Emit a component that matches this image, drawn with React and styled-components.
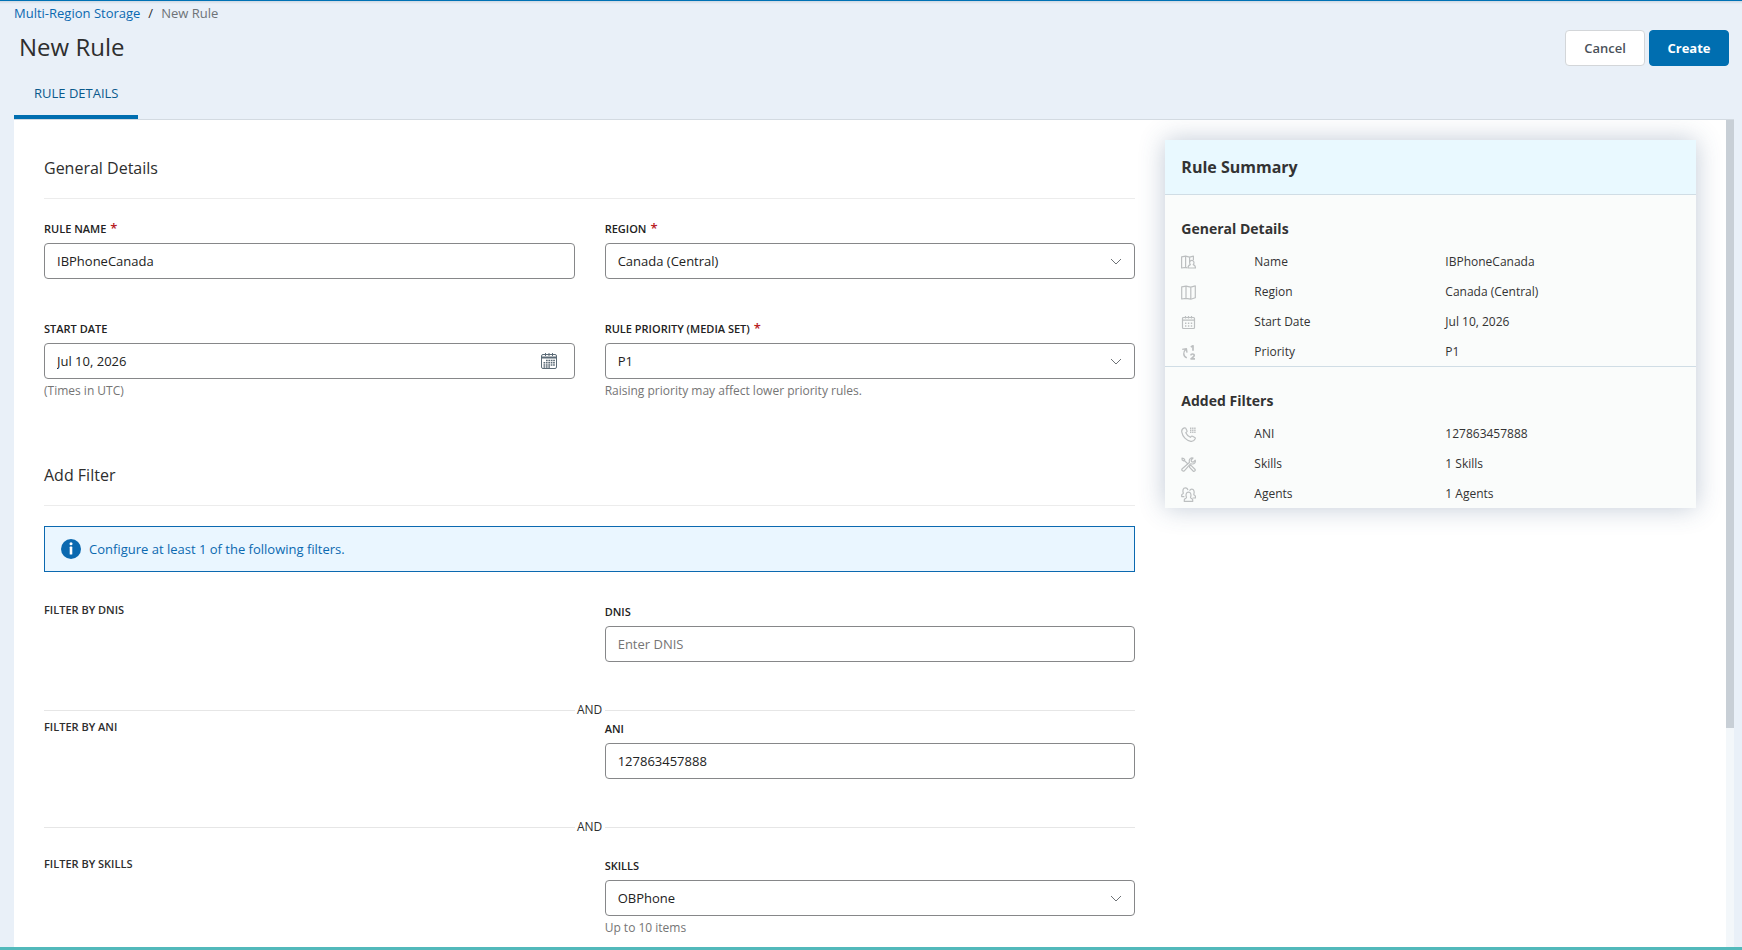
import React, { useState } from 'react'
import styled, { createGlobalStyle } from 'styled-components'

function App() {
  return (
    <>
        <GlobalStyle />
        <MainContainer>
            <Breadcrumb aria-label="Breadcrumb">
                <CrumbLink href="#storage">Multi-Region Storage</CrumbLink>
                <Slash>/</Slash>
                <Current>New Rule</Current>
            </Breadcrumb>
            <TopBar>
                <Title>New Rule</Title>
                <ButtonBox>
                    <Button type="button">Cancel</Button>
                    <Button type="button" $primary>Create</Button>
                </ButtonBox>
            </TopBar>
            <TabBar role="tablist">
                <Tab type="button" role="tab" aria-selected="true">RULE DETAILS</Tab>
            </TabBar>
            <PanelBox>
                <ContentBox>
                    <RuleForm />
                    <RuleSummary />
                </ContentBox>
                <ScrollTrack>
                    <ScrollThumb />
                </ScrollTrack>
            </PanelBox>
        </MainContainer>
    </>
  )
}

export default App

function RuleForm() {
  const [name, setName] = useState('IBPhoneCanada')
  const [date, setDate] = useState('Jul 10, 2026')
  const [dnis, setDnis] = useState('')
  const [ani, setAni] = useState('127863457888')

  return (
    <Form>
        <SectionTitle>General Details</SectionTitle>
        <FieldRow>
            <Field id="rule-name" label="RULE NAME" required>
                <Input id="rule-name" value={name} onChange={e => setName(e.target.value)} />
            </Field>
            <Field id="region" label="REGION" required>
                <Dropdown id="region" options={['Canada (Central)']} />
            </Field>
            <Field id="start-date" label="START DATE" hint="(Times in UTC)">
                <Input id="start-date" value={date} onChange={e => setDate(e.target.value)} />
                <CalendarButton type="button" aria-label="Open calendar">
                    <DatePickerIcon />
                </CalendarButton>
            </Field>
            <Field id="priority" label="RULE PRIORITY (MEDIA SET)" required hint="Raising priority may affect lower priority rules.">
                <Dropdown id="priority" options={['P1']} />
            </Field>
        </FieldRow>

        <SectionTitle className="filters">Add Filter</SectionTitle>
        <Notice>
            <InfoIcon />
            <span>Configure at least 1 of the following filters.</span>
        </Notice>
        <FilterRow $spaced>
            <FilterName>FILTER BY DNIS</FilterName>
            <Field id="dnis" label="DNIS">
                <Input id="dnis" placeholder="Enter DNIS" value={dnis} onChange={e => setDnis(e.target.value)} />
            </Field>
        </FilterRow>
        <Divider><span>AND</span></Divider>
        <FilterRow>
            <FilterName>FILTER BY ANI</FilterName>
            <Field id="ani" label="ANI">
                <Input id="ani" value={ani} onChange={e => setAni(e.target.value)} />
            </Field>
        </FilterRow>
        <Divider><span>AND</span></Divider>
        <FilterRow $spaced>
            <FilterName>FILTER BY SKILLS</FilterName>
            <Field id="skills" label="SKILLS" hint="Up to 10 items">
                <Dropdown id="skills" options={['OBPhone']} />
            </Field>
        </FilterRow>
    </Form>
  )
}

function Field({ id, label, required, hint, children }) {
  return (
    <FieldBox>
        <Label htmlFor={id}>
            {label}
            {required && <Star>*</Star>}
        </Label>
        <ControlBox>{children}</ControlBox>
        <Hint>{hint}</Hint>
    </FieldBox>
  )
}

function Dropdown({ id, options }) {
  return (
    <>
        <Select id={id}>
            {options.map(option => <option key={option}>{option}</option>)}
        </Select>
        <Chevron viewBox="0 0 12 8" aria-hidden="true">
            <path d="M1 1l5 5 5-5" />
        </Chevron>
    </>
  )
}

const generalItems = [
  { icon: <NameIcon />, label: 'Name', value: 'IBPhoneCanada' },
  { icon: <MapIcon />, label: 'Region', value: 'Canada (Central)' },
  { icon: <CalendarIcon />, label: 'Start Date', value: 'Jul 10, 2026' },
  { icon: <PriorityIcon />, label: 'Priority', value: 'P1' },
]

const filterItems = [
  { icon: <PhoneIcon />, label: 'ANI', value: '127863457888' },
  { icon: <ToolsIcon />, label: 'Skills', value: '1 Skills' },
  { icon: <AgentsIcon />, label: 'Agents', value: '1 Agents' },
]

function RuleSummary() {
  return (
    <SummaryCard>
        <SummaryHeader>Rule Summary</SummaryHeader>
        <SummarySection title="General Details" items={generalItems} />
        <SummarySection title="Added Filters" items={filterItems} />
    </SummaryCard>
  )
}

function SummarySection({ title, items }) {
  return (
    <SummaryBox>
        <SummaryTitle>{title}</SummaryTitle>
        {items.map(item => (
            <SummaryRow key={item.label}>
                {item.icon}
                <span>{item.label}</span>
                <span>{item.value}</span>
            </SummaryRow>
        ))}
    </SummaryBox>
  )
}

function NameIcon() {
  return (
    <SmallIcon viewBox="0 0 15 15" aria-hidden="true">
        <path d="M.6 1.800L4.600 1.200V12.400L.6 13zM4.600 1.200L8.600 2.200V7M4.600 12.400L6.200 12.800M8.600 2.200L12.400 1.200V5" />
        <path d="M9.400 9.600C8 8 8.600 5.400 10.800 5.400s2.800 2.600 1.400 4.200c1.600.5 2.300 1.400 2.300 3.400H7c0-2 .8-2.900 2.400-3.400z" />
    </SmallIcon>
  )
}

function MapIcon() {
  return (
    <SmallIcon viewBox="0 0 15 15" aria-hidden="true">
        <path d="M.7 1.800L5 1.100V13.400L.7 14zM5 1.100L9.800 2.100V14.200L5 13.400M9.800 2.100L14.300.9V12.800L9.800 14.200" />
    </SmallIcon>
  )
}

function CalendarIcon() {
  return (
    <SmallIcon viewBox="0 0 15 15" aria-hidden="true">
        <rect x="1.500" y="2.500" width="12" height="11" rx="1" />
        <path d="M1.500 5.200h12M4.500 1v2.600M7.500 1v2.600M10.500 1v2.600" />
        <path d="M4 8.200h7.600M4 11h7.600" strokeDasharray="1.400 1.500" strokeWidth="1.500" />
    </SmallIcon>
  )
}

function PriorityIcon() {
  return (
    <SmallIcon viewBox="0 0 15 15" aria-hidden="true">
        <path d="M5.800 12.800C1.800 11 2 7 4.800 4.200M1.200 4.400l4.200-.6.6 3.800" strokeWidth="1.400" />
        <path d="M9.800 2L12 .8V5.800M9.800 10.400c.2-2 3.600-1.800 3.400.1-.1 1.200-1.900 1.900-3.100 3.400h3.900" strokeWidth="1.700" />
    </SmallIcon>
  )
}

function PhoneIcon() {
  return (
    <SmallIcon viewBox="0 0 15 15" aria-hidden="true">
        <path d="M3.600.8C1.500 1.400.4 3 .8 5.100c.8 4.600 4.500 8.400 9 9.200 2 .3 3.600-.8 4.400-2.500.2-.5 0-.9-.4-1.200l-2.300-1.400c-.5-.3-1-.2-1.300.2l-.8.9c-2-.9-3.700-2.600-4.600-4.600l.9-.8c.4-.4.5-.9.2-1.300L4.700 1.200C4.400.8 4 .7 3.600.8z" />
        <path d="M9 1.200h6M9 3.200h6M9 5.200h6" strokeDasharray="1.400 .7" strokeWidth="1.500" />
    </SmallIcon>
  )
}

function ToolsIcon() {
  return (
    <SmallIcon viewBox="0 0 15 15" aria-hidden="true">
        <path d="M1 1.200l1.800.3 1 1.600-1 .9L1.200 3zM3.400 3.600L7 7M8.600 9.600c-.2-.7.700-1.500 1.400-1.200l3.900 3.800c1 1.200-.6 2.800-1.800 1.800L8.600 10.400z" />
        <path d="M14.200 3.200l-2 1.900-1.700-.4-.4-1.700L12 1C10.200.3 8 1.700 8.300 4L8.400 5.500l-7.200 6.200c-1.200 1.300.8 3.300 2.100 2.100l6.200-7 1.700.2c2.200.2 3.700-1.900 3-3.800z" />
    </SmallIcon>
  )
}

function AgentsIcon() {
  return (
    <SmallIcon viewBox="0 0 15 15" aria-hidden="true">
        <path d="M3.400 9.600H.7V8c0-.9 1.600-1 1.600-1.800C1.400 3.400 2 .8 4.400.8c1.500 0 2.300 1 2.500 2.400" />
        <path d="M8.600 3.800C9 2.700 9.700 2.200 10.800 2.200c2.200 0 2.900 2.600 2 5.200 0 .8 1.600.9 1.600 1.800v1.800h-2.800" />
        <path d="M3.300 14.400v-1.600c0-1.300 2.200-1.200 2.200-2.300C4.500 8 5 5.200 7.500 5.200s3 2.800 2 5.300c0 1.100 2.200 1 2.200 2.300v1.600z" />
    </SmallIcon>
  )
}

function DatePickerIcon() {
  return (
    <svg width="16" height="16" viewBox="0 0 16 16" fill="none" stroke="#5c6b77" aria-hidden="true">
        <rect x=".5" y="1.500" width="15" height="14" rx="1.500" />
        <path d="M1 4.500h14" strokeWidth="2" />
        <path d="M4.500 0v3M8 0v3M11.500 0v3" />
        <path d="M5 7.500h9M2.500 9.800h11.500M2.500 12h11.500M2.500 14h7" strokeWidth="1.600" strokeDasharray="1.700 .7" />
    </svg>
  )
}

function InfoIcon() {
  return (
    <svg width="20" height="20" viewBox="0 0 20 20" aria-hidden="true">
        <circle cx="10" cy="10" r="10" fill="#0b69b0" />
        <circle cx="10" cy="4.800" r="1.500" fill="#fff" />
        <rect x="8.700" y="7.600" width="2.600" height="8" rx=".6" fill="#fff" />
    </svg>
  )
}

const GlobalStyle = createGlobalStyle`
    * {
        box-sizing: border-box;
    }
    body {
        margin: 0;
        color: #2e2e2e;
        font-family: "Open Sans", "Noto Sans", sans-serif;
        font-size: 13px;
    }
    button, input, select {
        font: inherit;
    }
`;

const MainContainer = styled.main`
    height: 100vh;
    display: flex;
    flex-direction: column;
    background: linear-gradient(#cfd8e2, #e9f0f8 3px);
    border-top: 1px solid #0072b5;
    border-bottom: 3px solid #52b9bb;
`;
const Breadcrumb = styled.nav`
    display: flex;
    gap: 8px;
    padding: 2px 14px 0;
    line-height: 20px;
`;
const CrumbLink = styled.a`
    color: #0b69b0;
    text-decoration: none;
`;
const Slash = styled.span``;
const Current = styled.span`
    color: #6e7377;
`;
const TopBar = styled.header`
    display: flex;
    justify-content: space-between;
    align-items: flex-start;
    padding: 7px 13px 0 19px;
`;
const Title = styled.h1`
    margin: 0;
    font-size: 24px;
    font-weight: 400;
    line-height: 34px;
`;
const ButtonBox = styled.div`
    display: flex;
    gap: 4px;
`;
const Button = styled.button`
    width: 80px;
    height: 36px;
    border: 1px solid ${props => props.$primary ? '#006eb0' : '#d3d6d9'};
    border-radius: 4px;
    background: ${props => props.$primary ? '#006eb0' : '#fff'};
    color: ${props => props.$primary ? '#fff' : '#4a5159'};
    font-weight: ${props => props.$primary ? 700 : 600};
    cursor: pointer;
`;
const TabBar = styled.div`
    display: flex;
    margin: 0 8px 0 14px;
    border-bottom: 1px solid #d3dae1;
`;
const Tab = styled.button`
    height: 53px;
    padding: 4px 20px 0;
    border: 0;
    border-bottom: 4px solid #006eb0;
    background: none;
    color: #0b5a8c;
    cursor: pointer;
`;
const PanelBox = styled.div`
    flex: 1;
    min-height: 0;
    display: flex;
    margin: 0 8px 0 14px;
    background: #fff;
`;
const ContentBox = styled.div`
    flex: 1;
    display: grid;
    grid-template-columns: repeat(3, 1fr);
    column-gap: 30px;
    align-items: start;
    padding: 20px 30px;
    overflow: hidden;
`;
const ScrollTrack = styled.div`
    width: 8px;
    background: #f3f7fa;
`;
const ScrollThumb = styled.div`
    height: 73.5%;
    background: #c8cfd6;
`;

const Form = styled.form`
    grid-column: span 2;
`;
const SectionTitle = styled.h2`
    margin: 0;
    padding: 16px 0 18px;
    border-bottom: 1px solid #ececec;
    font-size: 16px;
    font-weight: 400;
    line-height: 24px;
    &.filters {
        margin-top: 48px;
    }
`;
const FieldRow = styled.div`
    display: grid;
    grid-template-columns: 1fr 1fr;
    gap: 22px 30px;
    padding-top: 22px;
`;
const FieldBox = styled.div``;
const Label = styled.label`
    display: block;
    margin-bottom: 6px;
    color: #222;
    font-size: 11px;
    font-weight: 600;
    line-height: 16px;
`;
const Star = styled.span`
    margin-left: 4px;
    color: #b8201f;
    font-size: 13px;
    line-height: 1;
`;
const ControlBox = styled.div`
    position: relative;
`;
const Input = styled.input`
    display: block;
    width: 100%;
    height: 36px;
    padding: 0 12px;
    border: 1px solid #868789;
    border-radius: 4px;
    background: #fff;
    color: #222;
    &::placeholder {
        color: #757575;
    }
`;
const Select = styled(Input).attrs({ as: 'select' })`
    appearance: none;
`;
const Chevron = styled.svg`
    position: absolute;
    top: 15px;
    right: 13px;
    width: 12px;
    height: 8px;
    fill: none;
    stroke: #6e7276;
    pointer-events: none;
`;
const CalendarButton = styled.button`
    position: absolute;
    top: 10px;
    right: 18px;
    display: flex;
    padding: 0;
    border: 0;
    background: none;
    cursor: pointer;
`;
const Hint = styled.div`
    height: 16px;
    margin-top: 4px;
    color: #757575;
    font-size: 12px;
    line-height: 16px;
`;
const Notice = styled.div`
    display: flex;
    align-items: center;
    gap: 8px;
    height: 46px;
    margin: 20px 0 10px;
    padding: 0 16px;
    border: 1px solid #0b69b0;
    background: #eaf6ff;
    color: #0b69b0;
`;
const FilterRow = styled.div`
    display: grid;
    grid-template-columns: 1fr 1fr;
    column-gap: 30px;
    padding-top: ${props => props.$spaced ? '20px' : '0'};
    ${FieldBox} {
        padding-top: 2px;
    }
`;
const FilterName = styled.div`
    font-size: 11px;
    font-weight: 600;
    line-height: 16px;
`;
const Divider = styled.div`
    display: flex;
    align-items: center;
    margin-top: 19px;
    font-size: 12px;
    line-height: 18px;
    span {
        width: 30px;
        text-align: center;
    }
    &::before, &::after {
        content: "";
        flex: 1;
        height: 1px;
        background: #e6e6e6;
    }
`;

const SummaryCard = styled.aside`
    background: #fafcfb;
    box-shadow: 0 0 24px rgba(50, 80, 120, 0.3);
    color: #333;
`;
const SummaryHeader = styled.h2`
    margin: 0;
    padding: 15px 16px;
    background: #e9f9ff;
    font-size: 16px;
    font-weight: 700;
    line-height: 24px;
`;
const SummaryBox = styled.section`
    padding: 24px 16px 0;
    border-top: 1px solid #d0dde5;
`;
const SummaryTitle = styled.h3`
    margin: 0 0 7px;
    font-size: 14px;
    font-weight: 700;
    line-height: 20px;
`;
const SummaryRow = styled.div`
    display: grid;
    grid-template-columns: 73px 191px 1fr;
    align-items: center;
    height: 30px;
    font-size: 12px;
`;
const SmallIcon = styled.svg`
    width: 15px;
    height: 15px;
    margin-top: 2px;
    fill: none;
    stroke: #bcbfc0;
    stroke-width: 1.2;
    stroke-linejoin: round;
`;
